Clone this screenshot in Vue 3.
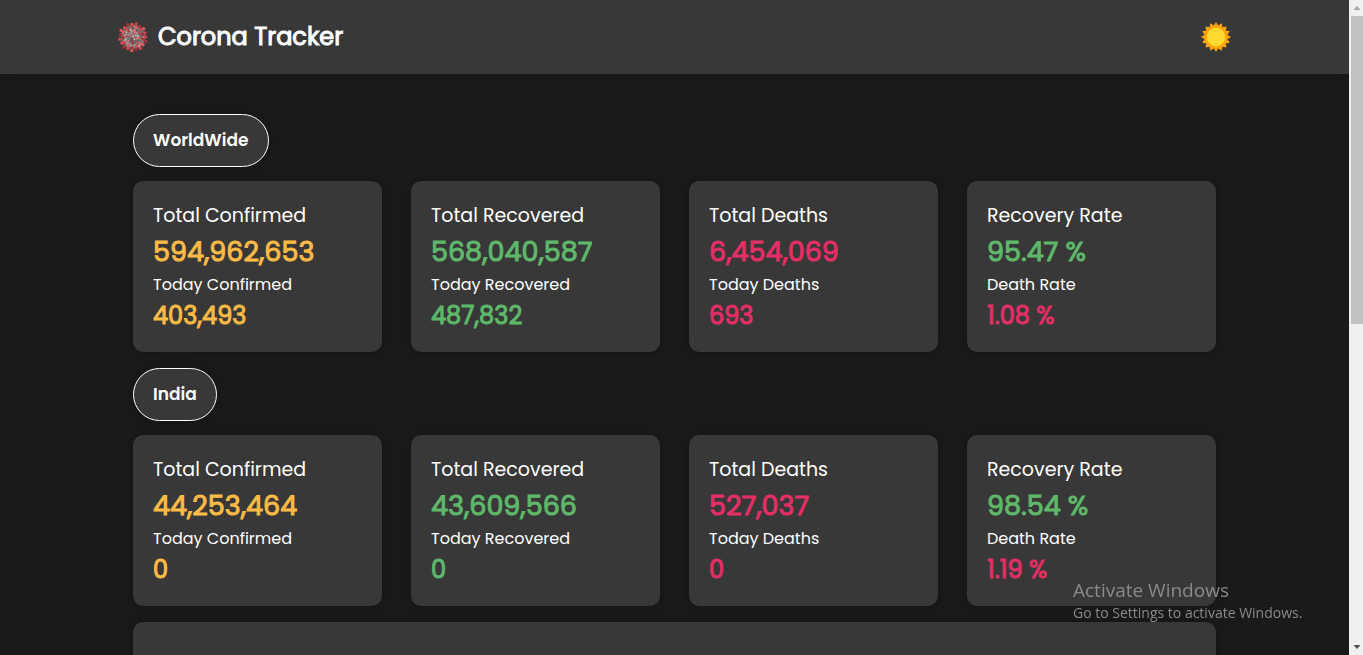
<script setup>
const sections = [
  {
    name: 'WorldWide',
    cards: [
      { title: 'Total Confirmed', total: '594,962,653', label: 'Today Confirmed', today: '403,493', tone: 'amber', toneSmall: 'amber' },
      { title: 'Total Recovered', total: '568,040,587', label: 'Today Recovered', today: '487,832', tone: 'green', toneSmall: 'green' },
      { title: 'Total Deaths', total: '6,454,069', label: 'Today Deaths', today: '693', tone: 'red', toneSmall: 'red' },
      { title: 'Recovery Rate', total: '95.47 %', label: 'Death Rate', today: '1.08 %', tone: 'green', toneSmall: 'red' },
    ],
  },
  {
    name: 'India',
    cards: [
      { title: 'Total Confirmed', total: '44,253,464', label: 'Today Confirmed', today: '0', tone: 'amber', toneSmall: 'amber' },
      { title: 'Total Recovered', total: '43,609,566', label: 'Today Recovered', today: '0', tone: 'green', toneSmall: 'green' },
      { title: 'Total Deaths', total: '527,037', label: 'Today Deaths', today: '0', tone: 'red', toneSmall: 'red' },
      { title: 'Recovery Rate', total: '98.54 %', label: 'Death Rate', today: '1.19 %', tone: 'green', toneSmall: 'red' },
    ],
  },
]

// Rings of protein spikes over the virus body: [count, radius, phase]
const rings = [[19, 13, 0], [13, 10.2, 0.2], [8, 6.6, 0.1], [4, 3.2, 0.4]]
const spikes = rings.flatMap(([count, radius, phase], ring) =>
  Array.from({ length: count }, (_, i) => {
    const a = (i / count) * Math.PI * 2 + phase
    const r = radius + (i % 2 ? 0.5 : -0.4)
    return {
      x: 15 + Math.cos(a) * r,
      y: 15 + Math.sin(a) * r,
      r: ring < 2 ? 1.7 : 1.3,
      fill: ['#cf4549', '#a3333a', '#dc5c5a'][(i + ring) % 3],
    }
  })
)
const specks = Array.from({ length: 60 }, (_, i) => {
  const a = i * 2.4
  const r = Math.sqrt(i / 60) * 11
  return {
    x: 14.2 + Math.cos(a) * r,
    y: 14.2 + Math.sin(a) * r,
    fill: ['#c4c4c4', '#54565a', '#9b9b9d', '#d5cdc9', '#6b6d70'][i % 5],
  }
})

const sunPoints = Array.from({ length: 32 }, (_, i) => {
  const a = (i / 32) * Math.PI * 2 - Math.PI / 2
  const r = i % 2 ? 11.6 : 15
  return `${(15 + Math.cos(a) * r).toFixed(2)},${(15 + Math.sin(a) * r).toFixed(2)}`
}).join(' ')
</script>

<template>
  <div class="window">
    <div class="page">
      <header class="topbar">
        <div class="topbar-inner">
          <a class="brand" href="#">
            <svg class="logo" viewBox="0 0 30 30" aria-hidden="true">
              <circle cx="15" cy="15" r="12" fill="#747375" />
              <rect v-for="(s, i) in specks" :key="'p' + i" :x="s.x" :y="s.y" width="1.7" height="1.7" :fill="s.fill" />
              <circle v-for="(s, i) in spikes" :key="'s' + i" :cx="s.x" :cy="s.y" :r="s.r" :fill="s.fill" />
              <g fill="#eda552">
                <circle cx="13" cy="5" r=".7" /><circle cx="9" cy="9" r=".6" />
                <circle cx="17" cy="10" r=".6" /><circle cx="23" cy="17" r=".6" />
                <circle cx="11" cy="18" r=".6" /><circle cx="18" cy="23" r=".6" />
              </g>
            </svg>
            <h1>Corona Tracker</h1>
          </a>
          <button class="theme" type="button" aria-label="Switch theme">
            <svg viewBox="0 0 30 30" aria-hidden="true">
              <defs>
                <radialGradient id="sun-disc">
                  <stop offset="0" stop-color="#ffdf33" />
                  <stop offset=".85" stop-color="#fed82d" />
                  <stop offset="1" stop-color="#ffc61f" />
                </radialGradient>
              </defs>
              <polygon :points="sunPoints" fill="#ffa30d" />
              <circle cx="15" cy="15" r="9.500" fill="url(#sun-disc)" />
            </svg>
          </button>
        </div>
      </header>

      <main class="content">
        <section v-for="section in sections" :key="section.name" class="region">
          <h2 class="pill">{{ section.name }}</h2>
          <div class="cards">
            <article v-for="card in section.cards" :key="card.title" class="card">
              <h3 class="title">{{ card.title }}</h3>
              <p class="total" :class="card.tone">{{ card.total }}</p>
              <p class="label">{{ card.label }}</p>
              <p class="today" :class="card.toneSmall">{{ card.today }}</p>
            </article>
          </div>
        </section>
        <section class="panel"></section>
      </main>
    </div>

    <div class="scrollbar" aria-hidden="true">
      <svg class="arrow" viewBox="0 0 14 16"><path d="M4.500 10h7l-3.500-4z" fill="#a3a3a3" /></svg>
      <div class="thumb"></div>
      <svg class="arrow" viewBox="0 0 14 16"><path d="M4.500 6h7l-3.500 4z" fill="#505050" /></svg>
    </div>

    <aside class="watermark">
      <p class="wm-title">Activate Windows</p>
      <p class="wm-text">Go to Settings to activate Windows.</p>
    </aside>
  </div>
</template>

<style>
html,
body {
  margin: 0;
  background: #1a1a1a;
}
</style>

<style scoped>
* {
  box-sizing: border-box;
}

h1,
h2,
h3,
p {
  margin: 0;
}

.window {
  display: flex;
  height: 100vh;
  overflow: hidden;
  color: #fff;
  font-family: Poppins, Inter, sans-serif;
}

.page {
  flex: 1;
  min-width: 0;
  overflow: hidden;
}

.topbar {
  background: #383838;
  padding: 0 16px;
  box-shadow: 0 0 10px rgba(0, 0, 0, 0.2);
}

.topbar-inner {
  display: flex;
  align-items: center;
  justify-content: space-between;
  max-width: 1113px;
  height: 74px;
  margin: 0 auto;
}

.brand {
  display: flex;
  align-items: center;
  gap: 10px;
  color: #fff;
  text-decoration: none;
}

.brand h1 {
  font-size: 24px;
  line-height: 36px;
  font-weight: 400;
  -webkit-text-stroke: 1px currentColor;
}

.logo {
  width: 30px;
  height: 30px;
}

.theme {
  width: 30px;
  height: 30px;
  padding: 0;
  border: 0;
  background: none;
  cursor: pointer;
}

.theme svg {
  display: block;
}

.content {
  display: flex;
  flex-direction: column;
  gap: 16px;
  max-width: 1083px;
  margin: 0 auto;
  padding-top: 40px;
}

.region {
  display: flex;
  flex-direction: column;
  align-items: flex-start;
  gap: 14px;
}

.pill {
  padding: 12px 19px;
  border: 1px solid #fff;
  border-radius: 27px;
  background: #383838;
  box-shadow: 0 0 10px rgba(0, 0, 0, 0.3);
  font-size: 17px;
  line-height: 27px;
  font-weight: 600;
}

.cards {
  display: grid;
  grid-template-columns: repeat(4, 1fr);
  gap: 29px;
  width: 100%;
}

.card {
  padding: 20px 20px 18px;
  border-radius: 10px;
  background: #383838;
  box-shadow: 0 0 10px rgba(0, 0, 0, 0.3);
}

.title {
  font-size: 19px;
  line-height: 30px;
  font-weight: 400;
}

.total {
  font-size: 27px;
  line-height: 41px;
  font-weight: 400;
  -webkit-text-stroke: 1px currentColor;
}

.label {
  font-size: 16px;
  line-height: 25px;
}

.today {
  font-size: 24px;
  line-height: 37px;
  font-weight: 400;
  -webkit-text-stroke: 1px currentColor;
}

.amber {
  color: #ffbb44;
}

.green {
  color: #5fb86a;
}

.red {
  color: #e42e66;
}

.panel {
  min-height: 400px;
  border-radius: 10px;
  background: #383838;
  box-shadow: 0 0 10px rgba(0, 0, 0, 0.3);
}

.scrollbar {
  display: flex;
  flex-direction: column;
  width: 14px;
  background: #f0f0f0;
}

.arrow {
  width: 14px;
  height: 16px;
}

.thumb {
  height: 47%;
  margin: 0 0 auto 2px;
  background: #c1c1c1;
}

.watermark {
  position: fixed;
  right: 54px;
  bottom: 31px;
  width: 236px;
  color: #8a8a8a;
  font-family: "Segoe UI", "Open Sans", sans-serif;
  white-space: nowrap;
}

.wm-title {
  font-size: 19px;
  line-height: 24px;
}

.wm-text {
  font-size: 14px;
  line-height: 22px;
}
</style>
